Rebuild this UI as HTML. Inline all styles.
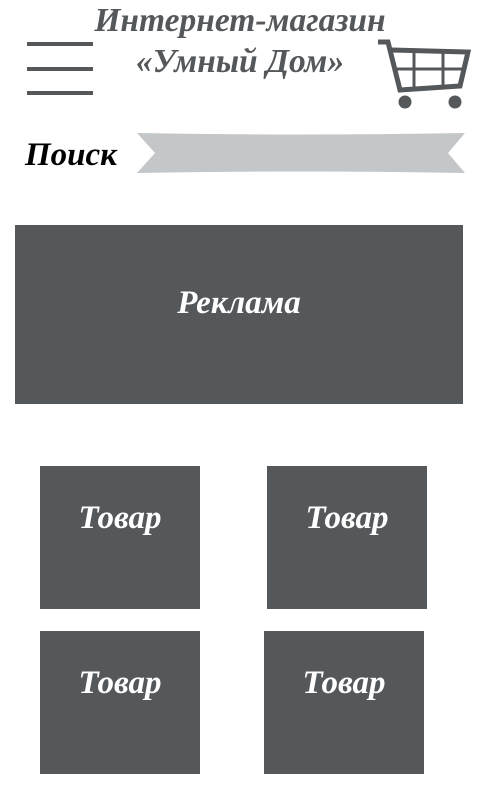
<!DOCTYPE html>
<html><head><meta charset="utf-8"><style>
body{margin:0;width:480px;height:800px;background:#fff;position:relative;overflow:hidden;font-family:"Liberation Serif","Noto Serif CJK SC",serif;font-weight:bold;font-style:italic}
.t{position:absolute;white-space:nowrap}
.b{position:absolute;background:#54585b;color:#fff;display:flex;justify-content:center;font-size:33px;align-items:flex-start;box-sizing:border-box;padding-top:32px;line-height:40px}
.h{position:absolute;left:27px;width:66px;height:4px;background:#54585b}
</style></head><body>
<div class="t" style="left:0;width:480px;text-align:center;top:0px;font-size:33.5px;color:#54585b;line-height:41px">Интернет-магазин<br>«Умный Дом»</div>
<div class="h" style="top:42px"></div><div class="h" style="top:67px"></div><div class="h" style="top:91px"></div>
<svg style="position:absolute;left:0;top:0" width="480" height="200">
<g fill="none" stroke="#54585b" stroke-width="4">
<polyline points="378,42 388,42 400,90 460,86 468,52 392,50" stroke-width="5"/>
<line x1="396" y1="69" x2="464" y2="69" stroke-width="3"/>
<line x1="414" y1="51" x2="414" y2="88" stroke-width="3"/>
<line x1="443" y1="51" x2="443" y2="87" stroke-width="3"/>
</g>
<circle cx="405" cy="102" r="6.5" fill="#54585b"/><circle cx="455" cy="102" r="6.5" fill="#54585b"/>
<path d="M137,133 Q300,136 465,133 L448,153 L465,173 Q300,170 137,173 L155,153 Z" fill="#c4c7c9"/>
</svg>
<div class="t" style="left:25px;top:137px;font-size:33px;color:#000">Поиск</div>
<div class="b" style="left:15px;top:225px;width:448px;height:179px;padding-top:58px">Реклама</div>
<div class="b" style="left:40px;top:466px;width:160px;height:143px">Товар</div>
<div class="b" style="left:267px;top:466px;width:160px;height:143px">Товар</div>
<div class="b" style="left:40px;top:631px;width:160px;height:143px">Товар</div>
<div class="b" style="left:264px;top:631px;width:160px;height:143px">Товар</div>
</body></html>
